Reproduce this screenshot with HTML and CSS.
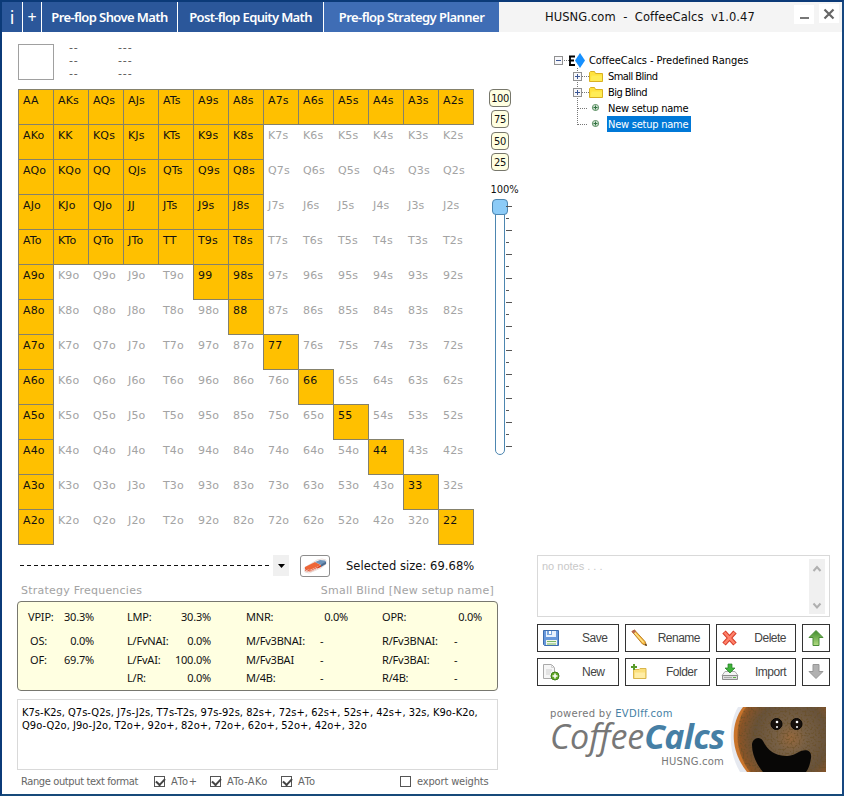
FILE: index.html
```html
<!DOCTYPE html>
<html lang="en">
<head>
<meta charset="utf-8">
<title>CoffeeCalcs</title>
<link rel="stylesheet" href="styles.css">
</head>
<body>
<div class="window">
  <header class="titlebar">
    <nav class="tabs">
      <a class="tab tab-info">i</a>
      <a class="tab tab-plus">+</a>
      <a class="tab tab-shove"><span>Pre-flop Shove Math</span></a>
      <a class="tab tab-equity"><span>Post-flop Equity Math</span></a>
      <a class="tab tab-active"><span>Pre-flop Strategy Planner</span></a>
    </nav>
    <div class="app-title">HUSNG.com&nbsp; -&nbsp; CoffeeCalcs&nbsp; v1.0.47</div>
    <div class="win-btn"><svg width="20" height="19"><path d="M6 13h9" stroke="#777" stroke-width="2"/></svg></div>
    <div class="win-btn close"><svg width="20" height="19"><path d="M5.500 5.500l9 9M14.500 5.500l-9 9" stroke="#666" stroke-width="2.200"/></svg></div>
  </header>
  <main class="body">
    <section class="left">
      <div class="hand-info">
        <div class="hand-box"></div>
        <div class="dashes first">--<br>--<br>--</div>
        <div class="dashes">---<br>---<br>---</div>
      </div>
      <div class="range-row">
        <div class="range" id="range"></div>
        <div class="weights">
          <span class="badge wide">100</span>
          <span class="badge">75</span>
          <span class="badge">50</span>
          <span class="badge">25</span>
          <span class="weight-label">100%</span>
          <svg class="slider" width="24" height="260" id="slider">
            <rect x="6.500" y="4.500" width="9" height="251" rx="4.500" fill="#fff" stroke="#4d86b0"/>
            <rect x="3.500" y=".5" width="15" height="15" rx="3.500" fill="#8ccbf7" stroke="#4d86b0"/>
          </svg>
        </div>
      </div>
      <div class="select-row">
        <div class="dash-line"></div>
        <div class="drop"><svg width="7" height="4"><path d="M0 0h7L3.500 4z"/></svg></div>
        <div class="eraser">
          <svg width="24" height="16" viewBox="0 0 24 16">
            <path d="M1 10L14 2l5-1 4 1v4l-5 4-12 5-4-1z" fill="#fff" stroke="#e8ddda"/>
            <path d="M2 9L12 4l6 3-11 5-5-1z" fill="#ee6637"/>
            <path d="M2 10.500l5 2 11-5.500v2L7 14l-5-1z" fill="#d8431f"/>
            <path d="M12 4l5-2 5 .5L23 4l-5 3z" fill="#6d93b9"/>
            <path d="M18 6.500l5-3V6l-5 3z" fill="#4a6a8e"/>
            <path d="M1.500 11.500l5 2.200 8-3.600" fill="none" stroke="#fff" stroke-width=".7"/>
          </svg>
        </div>
        <div class="selected-size">Selected size: 69.68%</div>
      </div>
      <div class="captions"><span class="cap-left">Strategy Frequencies</span><span class="cap-right">Small Blind [New setup name]</span></div>
      <div class="stats">
        <div class="stat"><span>VPIP:</span><span>30.3%</span></div>
        <div class="stat"><span>LMP:</span><span>30.3%</span></div>
        <div class="stat"><span>MNR:</span><span>0.0%</span></div>
        <div class="stat"><span>OPR:</span><span>0.0%</span></div>
        <div class="stat inset"><span>OS:</span><span>0.0%</span></div>
        <div class="stat"><span>L/FvNAI:</span><span>0.0%</span></div>
        <div class="stat"><span>M/Fv3BNAI:</span><span class="none">-</span></div>
        <div class="stat"><span>R/Fv3BNAI:</span><span class="none">-</span></div>
        <div class="stat inset"><span>OF:</span><span>69.7%</span></div>
        <div class="stat"><span>L/FvAI:</span><span>100.0%</span></div>
        <div class="stat"><span>M/Fv3BAI</span><span class="none">-</span></div>
        <div class="stat"><span>R/Fv3BAI:</span><span class="none">-</span></div>
        <div class="stat"></div>
        <div class="stat"><span>L/R:</span><span>0.0%</span></div>
        <div class="stat"><span>M/4B:</span><span class="none">-</span></div>
        <div class="stat"><span>R/4B:</span><span class="none">-</span></div>
      </div>
      <div class="output"><span class="line1">K7s-K2s, Q7s-Q2s, J7s-J2s, T7s-T2s, 97s-92s, 82s+, 72s+, 62s+, 52s+, 42s+, 32s, K9o-K2o,</span><br><span class="line2">Q9o-Q2o, J9o-J2o, T2o+, 92o+, 82o+, 72o+, 62o+, 52o+, 42o+, 32o</span></div>
      <div class="formats">
        <span class="fmt-label">Range output text format</span>
        <label class="check c1"><i class="box on"></i>ATo+</label>
        <label class="check c2"><i class="box on"></i>ATo-AKo</label>
        <label class="check c3"><i class="box on"></i>ATo</label>
        <label class="check c4"><i class="box"></i>export weights</label>
      </div>
    </section>
    <aside class="right">
      <div class="tree">
        <svg class="tree-art" width="56" height="80" viewBox="0 0 56 80">
          <defs>
            <g id="folder"><path d="M.5 1.500l1-1h4l1 2h7v8H.500z" fill="#ffe23d" stroke="#d9b021"/><path d="M1.500 10l1-5.500h10.500V10z" fill="#ffec55"/></g>
            <g id="entry"><circle r="3" fill="#e4f1e4" stroke="#6f9c75" stroke-width="1.200"/><path d="M-2 0h4M0-2v4" stroke="#2f7040" stroke-width="1.200"/></g>
          </defs>
          <g stroke="#777" stroke-dasharray="1 1"><path d="M10 8.500h5M23.500 16v57M28 24.500h7M28 40.500h7M24 56.500h10M24 72.500h10"/></g>
          <g fill="#f7f7fa" stroke="#919191"><rect x=".5" y="4.500" width="8" height="8"/><rect x="19.500" y="20.500" width="8" height="8"/><rect x="19.500" y="36.500" width="8" height="8"/></g>
          <path d="M2 8.500h5M21 24.500h5M23.500 22v5M21 40.500h5M23.500 38v5" stroke="#3b5694"/>
          <path d="M15 4.500h6M16 4v10M15 13h6M15 8.500h5" stroke="#000" stroke-width="1.800" fill="none"/>
          <path d="M26 1l5 7.500L26 16l-5-7.500z" fill="#1690ff"/>
          <use href="#folder" x="35" y="19"/>
          <use href="#folder" x="35" y="35"/>
          <use href="#entry" x="41.500" y="55.500"/>
          <use href="#entry" x="41.500" y="71.500"/>
        </svg>
        <ul class="tree-items">
          <li class="root">CoffeeCalcs - Predefined Ranges</li>
          <li class="sb">Small Blind</li>
          <li class="bb">Big Blind</li>
          <li>New setup name</li>
          <li><span class="chosen">New setup name</span></li>
        </ul>
      </div>
      <div class="notes"><span>no notes . . .</span>
        <div class="scroll"><svg width="16" height="55"><path d="M4.500 12l3.500-4 3.500 4M4.500 44.500l3.500 4 3.500-4" fill="none" stroke="#b0b0b0" stroke-width="2"/></svg></div>
      </div>
      <div class="buttons">
        <button><svg width="18" height="18"><path d="M1.500 1.500h15v15h-14l-1-1z" fill="#6798dc" stroke="#3c6dae"/><path d="M4 2h10v6H4z" fill="#e7f1fc"/><path d="M5 2h5v4H5z" fill="#79a5dd"/><path d="M7 2h2v3H7z" fill="#fff"/><path d="M4 11h11v5H4z" fill="#f1f7e9"/><path d="M5 12.500h9M5 15h9" stroke="#7ab664"/></svg><span class="t-save">Save</span></button>
        <button><svg width="18" height="18"><path d="M2 2.500L4.500 1 15 12.500l1.500 4-4-1.500z" fill="#f4b73c" stroke="#b8761d" stroke-width=".9"/><path d="M4 3l9.500 10.500" stroke="#ffe48a" stroke-width="1.200"/><path d="M1.500 2.500L4.500.500 6 2.500 3.500 4.800z" fill="#b9674c"/><path d="M14.500 16l1.500-1.500 1 2.500z" fill="#473827"/></svg><span class="t-rename">Rename</span></button>
        <button><svg width="18" height="18"><path d="M3 3l11 12M14 3L3 15" stroke="#d63d29" stroke-width="4.600"/><path d="M3.500 3.500l10 11M13.500 3.500l-10 11" stroke="#ff826b" stroke-width="2.600"/></svg><span class="t-delete">Delete</span></button>
        <button class="arrow"><svg width="18" height="18"><defs><linearGradient id="g" x2="0" y2="1"><stop stop-color="#3f8c2c"/><stop offset="1" stop-color="#b2dc82"/></linearGradient></defs><path d="M9 1.500l7 7h-4v8H6v-8H2z" fill="url(#g)" stroke="#4b8d38"/></svg></button>
        <button><svg width="18" height="18"><path d="M1.500 1.500h8l3 3v11h-11z" fill="#f6f6f6" stroke="#aaa"/><path d="M9.500 1.500v3h3M4 7h6M4 9h5M4 11h4" fill="none" stroke="#d0d0d0"/><circle cx="13" cy="13" r="4" fill="#65a926" stroke="#3e801a"/><path d="M10.500 13h5M13 10.500v5" stroke="#fff" stroke-width="1.500"/></svg><span class="t-new">New</span></button>
        <button><svg width="18" height="18"><path d="M4 6.500h5l1-1h6v10H3.500V7" fill="#fbdf7c" stroke="#d9b54b"/><path d="M5 9.500h10V15H5z" fill="#ffeda6"/><path d="M1 4h6M4 1v6" stroke="#599b2b" stroke-width="2"/></svg><span class="t-folder">Folder</span></button>
        <button><svg width="18" height="18"><path d="M4 8.500h10l3 4H1z" fill="#f4f4f4" stroke="#aaa"/><path d="M1.500 12.500h15v4h-15z" fill="#ddd" stroke="#8d8d8d"/><path d="M3 14.500h8" stroke="#aaa"/><path d="M12 14.500h3" stroke="#5aaf42"/><path d="M7 1h4v4h3L9 10 4 5h3z" fill="#3fb33a" stroke="#237d25" stroke-width=".7"/></svg><span class="t-import">Import</span></button>
        <button class="arrow"><svg width="18" height="18"><path d="M6 1.500h6v7h4l-7 7-7-7h4z" fill="#b1b1b1" stroke="#979797"/></svg></button>
      </div>
      <div class="brand">
        <div class="brand-text">
          <div class="powered">powered by <b>EVDIff.com</b></div>
          <div class="logo"><span class="coffee">Coffee</span><span class="calcs">Calcs</span></div>
          <div class="site">HUSNG.com</div>
        </div>
        <svg class="cup" width="97" height="65" viewBox="0 0 97 65">
          <defs>
            <radialGradient id="brew" gradientUnits="userSpaceOnUse" cx="62" cy="31" r="60"><stop stop-color="#96683c"/><stop offset=".25" stop-color="#776046"/><stop offset=".62" stop-color="#67523a"/><stop offset=".85" stop-color="#8a5426"/><stop offset="1" stop-color="#c0732c"/></radialGradient>
            <filter id="grain" x="0" y="0" width="1" height="1"><feTurbulence type="fractalNoise" baseFrequency=".5" numOctaves="2" seed="4"/><feColorMatrix values="0 0 0 0 .14  0 0 0 0 .08  0 0 0 0 .02  0 6 0 0 -2.900"/><feComposite in2="SourceGraphic" operator="in"/></filter>
          </defs>
          <path d="M9 0C-1 18-1 45 11 65h86V0z" fill="#e6e9f0"/>
          <path d="M14 0C1 17 1 44 18 65h79V0z" fill="#c9742b"/>
          <path d="M17 0C5 17 5 44 21 65h76V0z" fill="url(#brew)"/>
          <path d="M17 0C5 17 5 44 21 65h76V0z" filter="url(#grain)" opacity=".6"/>
          <path d="M23 38c0-6 7-10 11-4 5 10 12 14 22 15 7 0 10-2 16-5 6-2 11 0 10 7-1 6-2 10-5 14H34c-6-7-11-17-11-27z" fill="#080706"/>
          <g fill="#17100c" stroke="#070504"><circle cx="47.500" cy="17" r="5.500"/><circle cx="67.500" cy="17" r="5.500"/></g>
          <g fill="#fff"><circle cx="48" cy="15" r="1.300"/><circle cx="48" cy="20" r="1"/><circle cx="68" cy="15" r="1.300"/><circle cx="68" cy="20" r="1"/></g>
        </svg>
      </div>
    </aside>
  </main>
</div>
<script src="app.js"></script>
</body>
</html>
```
FILE: styles.css
```css
* { box-sizing: border-box; }
body { margin: 0; font-family: "DejaVu Sans", sans-serif; font-size: 11px; color: #111; background: #fff; }
.window { width: 844px; height: 796px; border: 2px solid #0b3a78; border-right-color: #164780; border-bottom-color: #164a7a; background: #fff; overflow: hidden; white-space: nowrap; }
.titlebar { display: flex; height: 30px; background: #f4f4f4; }
.tabs { display: flex; gap: 1px; background: #fff; width: 497px; }
.tab { display: flex; align-items: center; justify-content: center; background: #2b579a; color: #fff; font: 600 13px/30px "Noto Sans", sans-serif; }
.tab-info { width: 20px; font-size: 18px; font-weight: 400; }
.tab-plus { width: 18px; font-size: 16px; font-weight: 400; }
.tab-shove { width: 135px; letter-spacing: -.6px; }
.tab-equity { width: 145px; letter-spacing: -.65px; }
.tab-active { width: 175px; background: #3f6db5; letter-spacing: -.55px; }
.app-title { width: 295px; padding-left: 46px; line-height: 30px; font-size: 11.500px; letter-spacing: .07px; }
.win-btn { width: 20px; height: 19px; margin-top: 3px; background: #fff; }
.win-btn.close { margin-left: 5px; margin-top: 2px; }
.body { display: flex; height: 762px; }
.left { width: 530px; padding: 12px 0 0 15px; }
.hand-info { display: flex; height: 36px; margin-left: 1px; }
.hand-box { width: 36px; height: 36px; border: 1px solid #a0a0a0; }
.dashes { font-size: 11px; line-height: 13px; margin: -3px 0 0 39px; color: #555; letter-spacing: .9px; }
.dashes.first { margin-left: 15px; width: 10px; }
.range-row { display: flex; margin: 9px 0 0 1px; height: 456px; }
.range { display: grid; grid-template-columns: repeat(13, 35px); grid-auto-rows: 35px; width: 456px; }
.cell { padding: 5px 0 0 5px; line-height: 14px; color: #a3a3a3; letter-spacing: .15px; }
.cell.on { margin: 0 -1px -1px 0; padding: 4px 0 0 4px; border: 1px solid #85816b; background: #ffc000; color: #111; }
.weights { display: flex; flex-direction: column; align-items: center; width: 52px; }
.badge { width: 18px; height: 18px; margin-bottom: 3.300px; border: 1px solid #77776b; border-radius: 4px; background: #ffffe1; font: 11px/17px "DejaVu Sans Condensed", sans-serif; letter-spacing: -.4px; text-align: center; }
.badge.wide { width: 22px; }
.weight-label { margin: 8px 0 0 9px; font: 11px/16px "DejaVu Sans Condensed", sans-serif; letter-spacing: -.1px; }
.slider { margin: 1px 0 0 2px; flex: none; }
.select-row { display: flex; height: 22px; margin-top: 10px; }
.dash-line { width: 251px; height: 1px; margin: 10px 0 0 3px; background: repeating-linear-gradient(90deg, #111 0 4px, transparent 4px 7px); }
.drop { display: flex; align-items: center; justify-content: center; width: 16px; height: 21px; margin-left: 2px; background: #f0f0f0; }
.eraser { display: flex; align-items: center; justify-content: center; width: 30px; height: 22px; margin-left: 11px; border: 1px solid #8d8d8d; border-radius: 3px; }
.selected-size { margin-left: 16px; line-height: 22px; font-size: 11.500px; letter-spacing: .05px; }
.captions { display: flex; justify-content: space-between; width: 477px; padding-left: 4px; margin-top: 5px; line-height: 18px; height: 16px; color: #a3a3a3; }
.cap-left, .cap-right { letter-spacing: .23px; }
.stats { display: grid; grid-template-columns: 66px 85px 102px 100px; grid-template-rows: 28px 21px 17px 19px; column-gap: 34px; width: 481px; height: 90px; margin-top: 3px; padding-left: 10px; border: 1px solid #77776f; border-radius: 4px; background: #ffffe1; font-family: "Noto Sans", sans-serif; }
.stats { grid-template-columns: 66px 84px 102px 100px; }
.stat { display: flex; align-items: center; justify-content: space-between; letter-spacing: -.2px; }
.stat:nth-child(4n+2) { margin: 0 1px 0 -1px; }
.stat.inset { padding-left: 2px; }
.stat .none { width: 28px; }
.output { width: 481px; height: 71px; margin-top: 8px; padding: 6px 4px; border: 1px solid #d9d9d9; font: 11px/13px "DejaVu Sans Condensed", sans-serif; color: #000; }
.line1, .line2 { letter-spacing: .03px; }
.formats { display: flex; height: 22px; padding-left: 4px; align-items: center; font: 11px "DejaVu Sans Condensed", sans-serif; color: #666; }
.fmt-label { width: 133px; letter-spacing: -.37px; }
.check { display: flex; align-items: center; gap: 6px; }
.c1 { width: 56px; letter-spacing: .5px; } .c2 { width: 71px; letter-spacing: .3px; } .c3 { width: 119px; letter-spacing: .5px; } .c4 { letter-spacing: -.15px; }
.box { width: 11px; height: 11px; border: 1px solid #555; }
.box.on::before { content: ""; display: block; width: 7px; height: 4px; margin: 1px 0 0 1px; border: solid #444; border-width: 0 0 2px 2px; transform: rotate(-47deg); }
.right { width: 300px; padding: 20px 0 0 5px; }
.tree { display: flex; height: 503px; padding-left: 17px; font: 11px/17px "DejaVu Sans Condensed", sans-serif; color: #000; }
.tree-items { list-style: none; margin: 0; padding: 0; letter-spacing: -.24px; }
.tree-items li { height: 16px; margin-left: -2px; }
.tree-items .root { margin-left: -21px; letter-spacing: -.05px; }
.tree-items .sb, .tree-items .bb { letter-spacing: -.55px; }
.chosen { display: inline-block; height: 16px; margin-left: -1px; padding: 0 3px 0 1px; background: #0078d7; color: #fff; }
.notes { display: flex; justify-content: space-between; width: 293px; height: 62px; border: 1px solid #d9d9d9; padding: 3px 4px; font: 11px/15px "Liberation Sans", sans-serif; color: #c8c8c8; }
.scroll { width: 16px; height: 55px; background: #f0f0f0; }
.buttons { display: grid; grid-template-columns: 82px 85px 80px 28px; grid-auto-rows: 28px; gap: 6px; margin-top: 7px; }
button { display: flex; align-items: center; justify-content: space-between; padding: 0 9px 0 4px; border: 1px solid #333; background: #fff; color: #444; font: 11.500px "Liberation Sans", sans-serif; letter-spacing: -.3px; text-align: left; }
.arrow { padding: 0 4px; }
.t-save { width: 27px; } .t-new { width: 27px; } .t-folder { width: 34px; }
.t-rename { letter-spacing: -.6px; }
.t-save, .t-new, .t-folder, .t-rename, .t-delete, .t-import { font-size: 12px; letter-spacing: -.5px; }
button svg { flex: none; }
.brand { display: flex; margin: 21px 0 0 13px; color: #777; }
.brand-text { width: 179px; }
.powered { line-height: 13px; font-size: 10px; letter-spacing: .3px; }
.powered b, .calcs { color: #467fa5; }
.powered b { font-weight: 400; }
.logo { height: 35px; font: italic 34px/33px "Open Sans", sans-serif; }
.coffee { letter-spacing: 0; }
.calcs { font-weight: 700; letter-spacing: -.7px; }
.site { width: 174px; text-align: right; font-size: 10px; line-height: 13px; letter-spacing: .2px; }
```
FILE: app.js
```js
const ranks = 'AKQJT98765432';
const range = document.getElementById('range');
for (let r = 0; r < 13; r++) {
  for (let c = 0; c < 13; c++) {
    const cell = document.createElement('div');
    const on = r === 0 || c === 0 || r === c || (r < 5 && c < 7) || (r === 5 && c === 6);
    cell.className = on ? 'cell on' : 'cell';
    cell.textContent = r === c ? ranks[r] + ranks[r] : r < c ? ranks[r] + ranks[c] + 's' : ranks[c] + ranks[r] + 'o';
    range.append(cell);
  }
}
const slider = document.getElementById('slider');
for (let i = 0; i <= 20; i++) {
  const tick = document.createElementNS('http://www.w3.org/2000/svg', 'path');
  tick.setAttribute('d', `M17 ${7.5 + i * 12}h${i % 2 ? 3 : 6}`);
  tick.setAttribute('stroke', '#555');
  slider.append(tick);
}
```
